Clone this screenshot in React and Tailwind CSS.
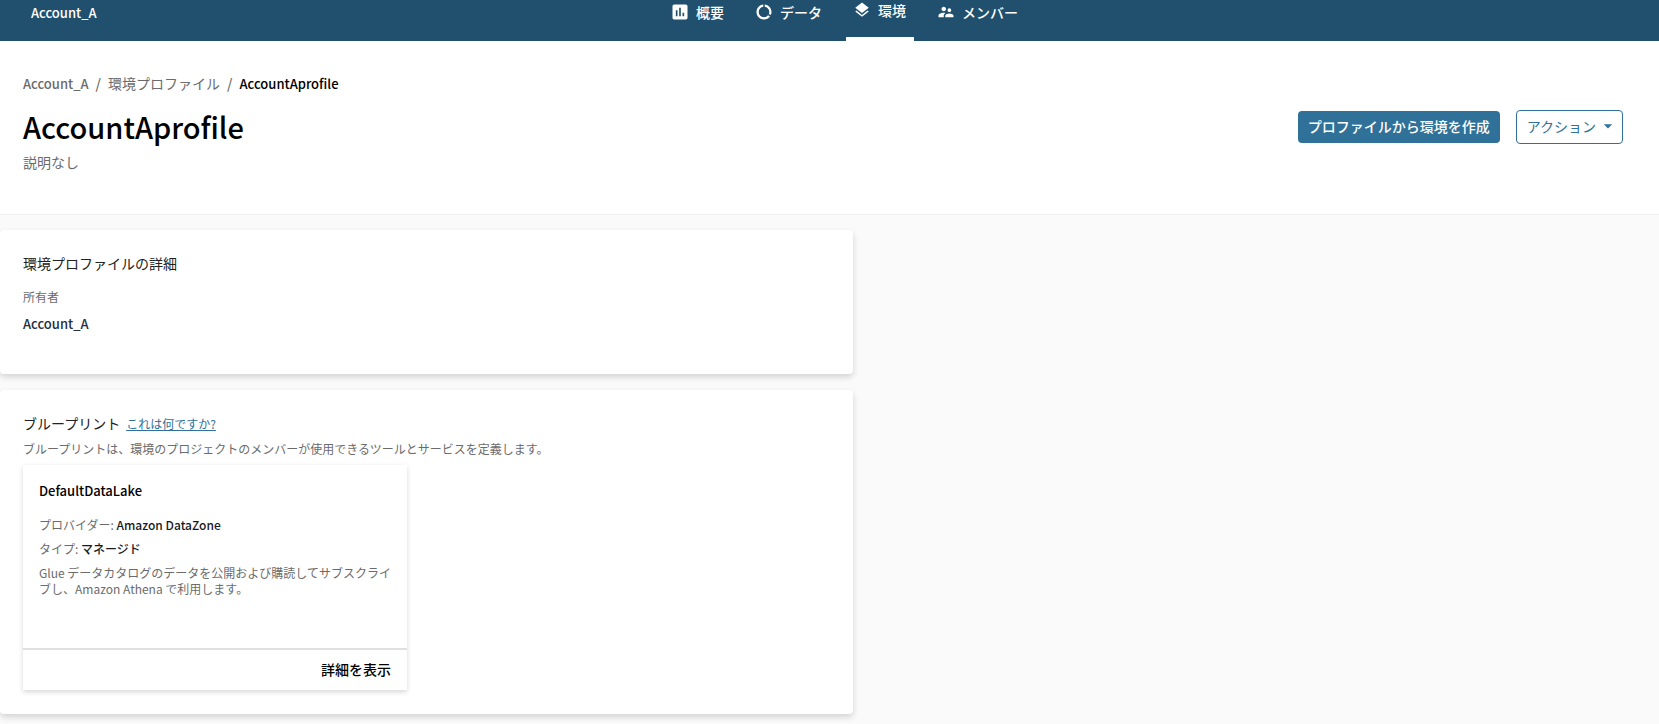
import React from "react";
import { MdAssessment, MdDataUsage, MdLayers, MdSupervisorAccount, MdArrowDropDown } from "react-icons/md";

const TABS = [
  { label: "概要", Icon: MdAssessment, size: "size-5" },
  { label: "データ", Icon: MdDataUsage, size: "size-[18px]" },
  { label: "環境", Icon: MdLayers, size: "size-[18px]", active: true },
  { label: "メンバー", Icon: MdSupervisorAccount, size: "size-[18px]" },
];

function TopBar() {
  return (
    <header className="grid h-[41px] grid-cols-[1fr_auto_1fr] bg-[#20506e] pl-[31px] text-white">
      <div className="pt-[3px] text-[13px] font-medium">Account_A</div>
      <nav className="flex gap-4">
        {TABS.map(({ label, Icon, size, active }) => (
          <a
            key={label}
            href="#"
            aria-current={active ? "page" : undefined}
            className={`flex items-center gap-1.5 pr-2 pb-[17px] pl-1.5 font-medium ${active ? "border-b-4 border-white" : ""}`}
          >
            <span className="flex size-5 items-center justify-center">
              <Icon className={size} aria-hidden="true" />
            </span>
            <span>{label}</span>
          </a>
        ))}
      </nav>
    </header>
  );
}

function PageHeader() {
  return (
    <section className="flex items-start justify-between border-b border-[#eeeeee] bg-white pt-8 pr-9 pb-[42px] pl-[23px]">
      <div>
        <nav aria-label="breadcrumb">
          <ol className="flex items-baseline gap-[7px] text-[#6b6b6b]">
            <li className="text-[13px] leading-5 font-medium">
              <a href="#">Account_A</a>
            </li>
            <li aria-hidden="true" className="font-medium">/</li>
            <li>
              <a href="#">環境プロファイル</a>
            </li>
            <li aria-hidden="true" className="font-medium">/</li>
            <li className="text-[13px] leading-5 font-medium text-black" aria-current="page">AccountAprofile</li>
          </ol>
        </nav>
        <h1 className="mt-3 text-[29px] leading-10 font-medium text-black">AccountAprofile</h1>
        <p className="mt-1.5 text-[#6b6b6b]">説明なし</p>
      </div>
      <div className="mt-[37px] flex items-center gap-4">
        <button className="h-8 rounded bg-[#2f7199] px-[10px] pb-0.5 font-medium text-white">プロファイルから環境を作成</button>
        <button className="flex h-[34px] items-center gap-0.5 rounded border border-[#2f7199] pr-1 pb-0.5 pl-[10px] text-[#2f7199]">
          <span>アクション</span>
          <MdArrowDropDown className="size-5" aria-hidden="true" />
        </button>
      </div>
    </section>
  );
}

function Panel({ children, className }) {
  return (
    <section className={`rounded bg-white px-[23px] pt-[23px] shadow-[0_3px_6px_rgba(0,0,0,0.16)] ${className}`}>{children}</section>
  );
}

function Blueprint() {
  return (
    <article className="mt-2 flex h-[225px] w-96 max-w-full flex-col bg-white text-xs text-[#6b6b6b] shadow-[0_2px_5px_rgba(0,0,0,0.16)]">
      <div className="flex-1 pt-4 pr-3 pl-4">
        <h3 className="text-[13px] leading-5 font-medium text-black">DefaultDataLake</h3>
        <p className="mt-4 leading-4">
          プロバイダー: <span className="font-medium text-[#16191f]">Amazon DataZone</span>
        </p>
        <p className="mt-2 leading-4">
          タイプ: <span className="font-medium text-[#16191f]">マネージド</span>
        </p>
        <p className="mt-2 leading-4">
          Glue データカタログのデータを公開および購読してサブスクライブし、Amazon Athena で利用します。
        </p>
      </div>
      <div className="flex h-[42px] items-center justify-end border-t-2 border-[#e0e0e0] px-4 pb-0.5">
        <button className="text-sm font-medium text-black">詳細を表示</button>
      </div>
    </article>
  );
}

export default function App() {
  return (
    <div className="min-h-screen bg-[#fafafa] font-['Noto_Sans_CJK_JP','Noto_Sans',sans-serif] text-sm leading-5">
      <TopBar />
      <PageHeader />
      <main className="grid grid-cols-[853fr_806fr] pt-[15px] pb-2">
        <div className="flex flex-col gap-4">
          <Panel className="h-36">
            <h2 className="text-[#222222]">環境プロファイルの詳細</h2>
            <dl className="mt-4">
              <dt className="text-xs text-[#6b6b6b]">所有者</dt>
              <dd className="mt-[9px] text-[13px] leading-5 font-medium text-[#232f3e]">Account_A</dd>
            </dl>
          </Panel>
          <Panel className="pb-6">
            <div className="flex items-baseline gap-1.5">
              <h2 className="text-[#222222]">ブループリント</h2>
              <a href="#" className="text-xs leading-5 text-[#2f7199] underline">これは何ですか?</a>
            </div>
            <p className="mt-[7px] text-xs leading-4 text-[#6b6b6b]">ブループリントは、環境のプロジェクトのメンバーが使用できるツールとサービスを定義します。</p>
            <Blueprint />
          </Panel>
        </div>
      </main>
    </div>
  );
}
